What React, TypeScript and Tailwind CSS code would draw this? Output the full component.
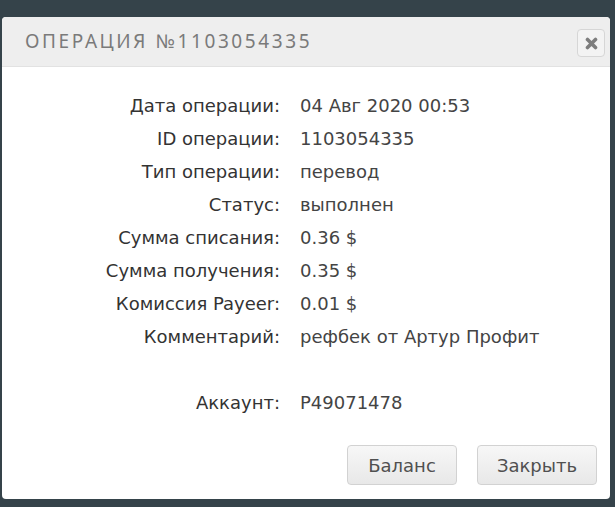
import React from "react";

const rows = [
	{ label: "Дата операции:", value: "04 Авг 2020 00:53" },
	{ label: "ID операции:", value: "1103054335" },
	{ label: "Тип операции:", value: "перевод" },
	{ label: "Статус:", value: "выполнен" },
	{ label: "Сумма списания:", value: "0.36 $" },
	{ label: "Сумма получения:", value: "0.35 $" },
	{ label: "Комиссия Payeer:", value: "0.01 $" },
	{ label: "Комментарий:", value: "рефбек от Артур Профит" },
	{ label: "", value: "" },
	{ label: "Аккаунт:", value: "P49071478" },
];

const App: React.FC = () => {
	return (
		<div className="w-[615px] h-[507px] bg-[#35434a] pt-[17px] pl-[2px] overflow-hidden">
			<div className="w-[608px] h-[482px] bg-white rounded-[4px] overflow-hidden flex flex-col">
				{/* Header */}
				<div className="h-[50px] bg-[#eeeeee] border-b border-[#e2e2e2] flex items-center justify-between pl-[23px] pr-[5px]">
					<span className="font-['Noto_Sans',sans-serif] text-[19px] tracking-[2.6px] text-[#7a7a7a] uppercase">
						Операция №1103054335
					</span>
					<button className="w-[28px] h-[28px] mt-[3px] rounded-[4px] border border-[#d6d6d6] bg-[#f3f3f3] flex items-center justify-center">
						<svg width="13" height="13" viewBox="0 0 13 13">
							<path d="M2.5 2.5 L10.5 10.5 M10.5 2.5 L2.5 10.5" stroke="#7d7d7d" strokeWidth="3.6" strokeLinecap="round" />
						</svg>
					</button>
				</div>

				{/* Details */}
				<div className="pt-[22px] font-['DejaVu_Sans',sans-serif] text-[18px]">
					{rows.map((row, i) => (
						<div key={i} className="flex h-[33px] items-center">
							<div className="w-[278px] text-right text-[#333]">{row.label}</div>
							<div className="pl-[20px] text-[#444]">{row.value}</div>
						</div>
					))}
				</div>

				{/* Buttons */}
				<div className="mt-auto mb-[14px] flex justify-end gap-[20px] pr-[13px]">
					<button className="w-[110px] h-[40px] rounded-[4px] border border-[#d2d2d2] bg-gradient-to-b from-[#f7f7f7] to-[#e8e8e8] font-['DejaVu_Sans',sans-serif] text-[18px] text-[#505050]">
						Баланс
					</button>
					<button className="w-[120px] h-[40px] rounded-[4px] border border-[#d2d2d2] bg-gradient-to-b from-[#f7f7f7] to-[#e8e8e8] font-['DejaVu_Sans',sans-serif] text-[18px] text-[#505050]">
						Закрыть
					</button>
				</div>
			</div>
		</div>
	);
};

export default App;
